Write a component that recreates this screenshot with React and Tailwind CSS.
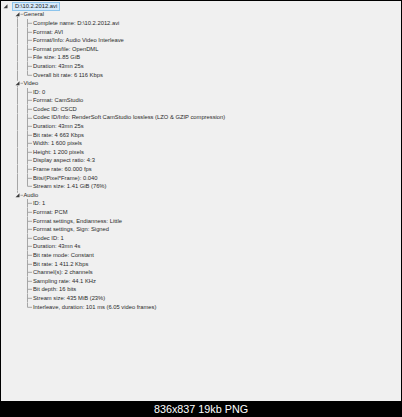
import React from "react";

const LINE = "#a5a5a5";
const H = 8.6;
const M = H / 2;

const groups = [
  {
    name: "General",
    items: [
      "Complete name: D:\\10.2.2012.avi",
      "Format: AVI",
      "Format/Info: Audio Video Interleave",
      "Format profile: OpenDML",
      "File size: 1.85 GiB",
      "Duration: 43mn 25s",
      "Overall bit rate: 6 116 Kbps",
    ],
  },
  {
    name: "Video",
    items: [
      "ID: 0",
      "Format: CamStudio",
      "Codec ID: CSCD",
      "Codec ID/Info: RenderSoft CamStudio lossless (LZO & GZIP compression)",
      "Duration: 43mn 25s",
      "Bit rate: 4 663 Kbps",
      "Width: 1 600 pixels",
      "Height: 1 200 pixels",
      "Display aspect ratio: 4:3",
      "Frame rate: 60.000 fps",
      "Bits/(Pixel*Frame): 0.040",
      "Stream size: 1.41 GiB (76%)",
    ],
  },
  {
    name: "Audio",
    items: [
      "ID: 1",
      "Format: PCM",
      "Format settings, Endianness: Little",
      "Format settings, Sign: Signed",
      "Codec ID: 1",
      "Duration: 43mn 4s",
      "Bit rate mode: Constant",
      "Bit rate: 1 411.2 Kbps",
      "Channel(s): 2 channels",
      "Sampling rate: 44.1 KHz",
      "Bit depth: 16 bits",
      "Stream size: 435 MiB (23%)",
      "Interleave, duration: 101 ms (6.05 video frames)",
    ],
  },
];

function Expander({ x }) {
  return <polygon points={`${x + 4},${M - 2} ${x + 4},${M + 2} ${x},${M + 2}`} fill="#3c3c3c" />;
}

function VLine({ x, from, to }) {
  return <line x1={x} x2={x} y1={from} y2={to} stroke={LINE} strokeWidth="1" />;
}

function Row({ gutter, children, svg }) {
  return (
    <div className="flex items-center h-[8.6px] whitespace-nowrap">
      <svg width={gutter} height={H} viewBox={`0 0 ${gutter} ${H}`} className="shrink-0 block">
        {svg}
      </svg>
      {children}
    </div>
  );
}

export default function App() {
  return (
    <div className="w-[402px] h-[417px] bg-black flex flex-col" style={{ fontFamily: '"Liberation Sans", Arial, sans-serif' }}>
      <div className="mt-px mx-px h-[400px] bg-[#f0f0f0] pt-[0.8px] text-[5.8px] text-[#2a2a2a]">
        <Row gutter={11} svg={<Expander x={2.5} />}>
          <span className="h-[9px] flex items-center px-[2px] bg-[#d3e9fa] border border-[#8cc4ec] text-[#202020]">
            D:\10.2.2012.avi
          </span>
        </Row>
        {groups.map((g, gi) => {
          const lastGroup = gi === groups.length - 1;
          return (
            <React.Fragment key={g.name}>
              <Row
                gutter={22.5}
                svg={
                  <>
                    <VLine x={16.5} from={gi === 0 ? M : 0} to={lastGroup ? M : H} />
                    <line x1={19.5} x2={22} y1={M} y2={M} stroke={LINE} strokeWidth="1" />
                    <rect x={14} y={M - 2.5} width={5} height={5} fill="#f0f0f0" />
                    <Expander x={14.5} />
                  </>
                }
              >
                <span>{g.name}</span>
              </Row>
              {g.items.map((t, i) => {
                const last = i === g.items.length - 1;
                return (
                  <Row
                    key={t}
                    gutter={32}
                    svg={
                      <>
                        {!lastGroup && <VLine x={16.5} from={0} to={H} />}
                        <VLine x={26.5} from={0} to={last ? M : H} />
                        <line x1={26.5} x2={31} y1={M} y2={M} stroke={LINE} strokeWidth="1" />
                      </>
                    }
                  >
                    <span>{t}</span>
                  </Row>
                );
              })}
            </React.Fragment>
          );
        })}
      </div>
      <div className="flex-1 flex items-center justify-center text-white text-[10.8px] leading-none">
        836x837 19kb PNG
      </div>
    </div>
  );
}
